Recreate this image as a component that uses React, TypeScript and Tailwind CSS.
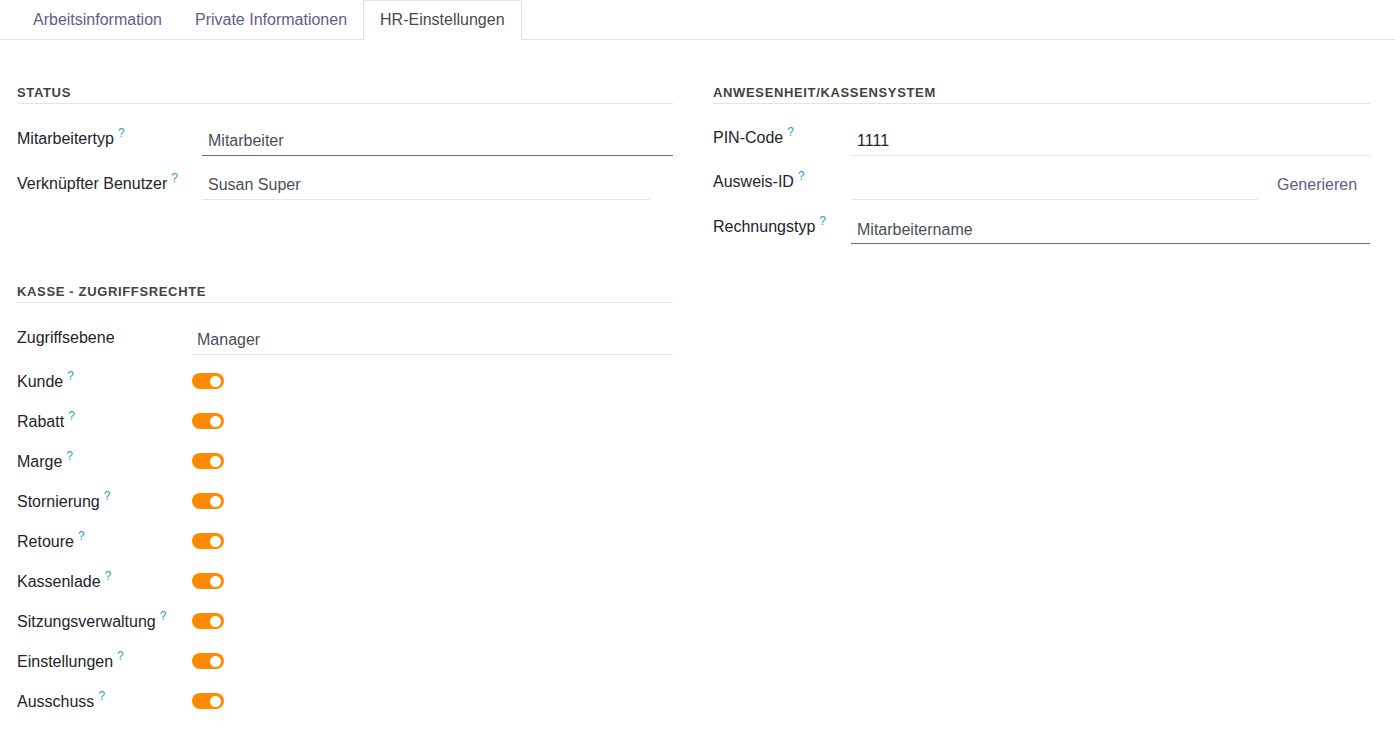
import React from "react";

const Q = () => (
  <span className="ml-[4px] text-[12px] leading-none align-top text-[#239fc2]">?</span>
);

const Toggle = () => (
  <div className="w-[32px] h-[16px] rounded-full bg-[#ff8a00] flex items-center justify-end pr-[3px]">
    <div className="w-[11px] h-[11px] rounded-full bg-white" />
  </div>
);

const Header = ({ children }: { children: React.ReactNode }) => (
  <div className="text-[13px] font-bold uppercase tracking-[0.65px] text-[#434343] border-b border-[#e3e3e3] pb-[2px] leading-[16px]">
    {children}
  </div>
);

const perms = [
  "Kunde",
  "Rabatt",
  "Marge",
  "Stornierung",
  "Retoure",
  "Kassenlade",
  "Sitzungsverwaltung",
  "Einstellungen",
  "Ausschuss",
];

export default function App() {
  return (
    <div className="w-[1395px] h-[733px] bg-white text-[16px] text-[#212529] overflow-hidden" style={{ fontFamily: '"Liberation Sans", Arial, sans-serif' }}>
      {/* Tabs */}
      <div className="flex border-b border-[#dee2e6] pl-[16px] h-[40px]">
        <div className="px-4 flex items-center text-[#665c85] h-[40px] border border-transparent">Arbeitsinformation</div>
        <div className="px-4 flex items-center text-[#665c85] h-[40px] border border-transparent -ml-[1px]">Private Informationen</div>
        <div className="px-4 flex items-center text-[#4a4a4a] h-[40px] border border-[#dee2e6] border-b-white bg-white -mb-px -ml-[1px]">HR-Einstellungen</div>
      </div>

      <div className="flex gap-[40px] pl-[17px] pt-[45px]">
        {/* Left column */}
        <div className="w-[656px] flex flex-col">
          <Header>Status</Header>
          <div className="flex flex-col mt-[21px]">
            <div className="flex items-start h-[44px]">
              <div className="w-[185px] pt-[2px]">Mitarbeitertyp<Q /></div>
              <div className="flex-1 border-b border-[#6b6b6b] h-[31px] pl-[6px] pt-[4px] text-[#495057]">Mitarbeiter</div>
            </div>
            <div className="flex items-start h-[44px]">
              <div className="w-[185px] pt-[3px]">Verknüpfter Benutzer<Q /></div>
              <div className="w-[448px] border-b border-[#e6e6e6] h-[31px] pl-[6px] pt-[4px] text-[#495057]">Susan Super</div>
            </div>
          </div>

          <div className="mt-[71px]">
            <Header>Kasse - Zugriffsrechte</Header>
          </div>
          <div className="flex flex-col mt-[22px]">
            <div className="flex items-start h-[36px]">
              <div className="w-[175px] pt-[1px]">Zugriffsebene</div>
              <div className="flex-1 border-b border-[#e6e6e6] h-[30px] pl-[5px] pt-[3px] text-[#495057]">Manager</div>
            </div>
            {perms.map((p) => (
              <div key={p} className="flex items-center h-[40px]">
                <div className="w-[175px] pt-[2px]">{p}<Q /></div>
                <Toggle />
              </div>
            ))}
          </div>
        </div>

        {/* Right column */}
        <div className="w-[657px] flex flex-col">
          <Header>Anwesenheit/Kassensystem</Header>
          <div className="flex flex-col mt-[21px]">
            <div className="flex items-start h-[44px]">
              <div className="w-[138px] pt-[1px]">PIN-Code<Q /></div>
              <div className="flex-1 border-b border-[#e6e6e6] h-[31px] pl-[6px] pt-[4px] text-[#212529]">1111</div>
            </div>
            <div className="flex items-start h-[44px]">
              <div className="w-[138px] pt-[1px]">Ausweis-ID<Q /></div>
              <div className="w-[407px] border-b border-[#e6e6e6] h-[31px]" />
              <div className="flex-1 pl-[19px] pt-[4px] text-[#665c85]">Generieren</div>
            </div>
            <div className="flex items-start h-[44px]">
              <div className="w-[138px] pt-[2px]">Rechnungstyp<Q /></div>
              <div className="flex-1 border-b border-[#6b6b6b] h-[31px] pl-[6px] pt-[5px] text-[#495057]">Mitarbeitername</div>
            </div>
          </div>
        </div>
      </div>
    </div>
  );
}
